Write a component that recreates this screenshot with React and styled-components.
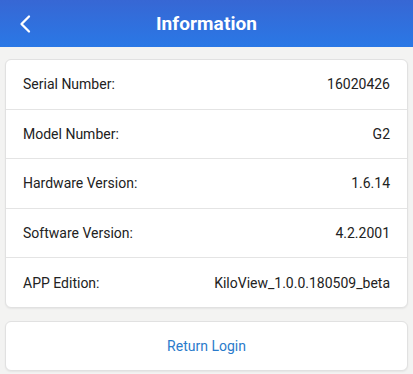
import styled, { createGlobalStyle } from "styled-components";

const GlobalStyle = createGlobalStyle`
  html, body {
    margin: 0;
    padding: 0;
    background: #f3f3f2;
    font-family: Roboto, "Liberation Sans", sans-serif;
  }
`;

const Page = styled.div`
  width: 413px;
  min-height: 374px;
  background: #f3f3f2;
`;

const Header = styled.header`
  position: relative;
  height: 47px;
  display: flex;
  align-items: center;
  justify-content: center;
  background: linear-gradient(180deg, #3767d4 0%, #2a78e6 100%);
  color: #fff;
`;

const BackButton = styled.button`
  position: absolute;
  left: 13px;
  top: 12px;
  width: 24px;
  height: 24px;
  padding: 0;
  border: 0;
  background: none;
  display: flex;
  align-items: center;
  justify-content: center;
`;

const Title = styled.h1`
  margin: 0;
  font-size: 19px;
  font-weight: 700;
  letter-spacing: 0.1px;
`;

const Content = styled.main`
  display: flex;
  flex-direction: column;
  gap: 13px;
  padding: 12px 5px 0;
`;

const Card = styled.section`
  background: #fff;
  border: 1px solid #e1e1e1;
  border-radius: 6px;
  box-shadow: 0 1px 2px rgba(0, 0, 0, 0.06);
`;

const Row = styled.div`
  display: flex;
  align-items: center;
  justify-content: space-between;
  height: 48.6px;
  padding: 0 17px 0 17px;
  font-size: 14px;
  color: #222;
  & + & {
    border-top: 1px solid #e4e4e4;
  }
`;

const ActionButton = styled.button`
  width: 100%;
  height: 48px;
  border: 0;
  background: none;
  font-family: inherit;
  font-size: 14px;
  color: #2a7bcb;
`;

const rows = [
  ["Serial Number:", "16020426"],
  ["Model Number:", "G2"],
  ["Hardware Version:", "1.6.14"],
  ["Software Version:", "4.2.2001"],
  ["APP Edition:", "KiloView_1.0.0.180509_beta"],
];

export default function App() {
  return (
    <Page>
      <GlobalStyle />
      <Header>
        <BackButton aria-label="Back">
          <svg width="14" height="20" viewBox="0 0 14 20">
            <path d="M11 2.5 L3.5 10 L11 17.5" fill="none" stroke="#fff" strokeWidth="2.3" strokeLinecap="round" strokeLinejoin="round" />
          </svg>
        </BackButton>
        <Title>Information</Title>
      </Header>
      <Content>
        <Card>
          {rows.map(([label, value]) => (
            <Row key={label}>
              <span>{label}</span>
              <span>{value}</span>
            </Row>
          ))}
        </Card>
        <Card>
          <ActionButton>Return Login</ActionButton>
        </Card>
      </Content>
    </Page>
  );
}
